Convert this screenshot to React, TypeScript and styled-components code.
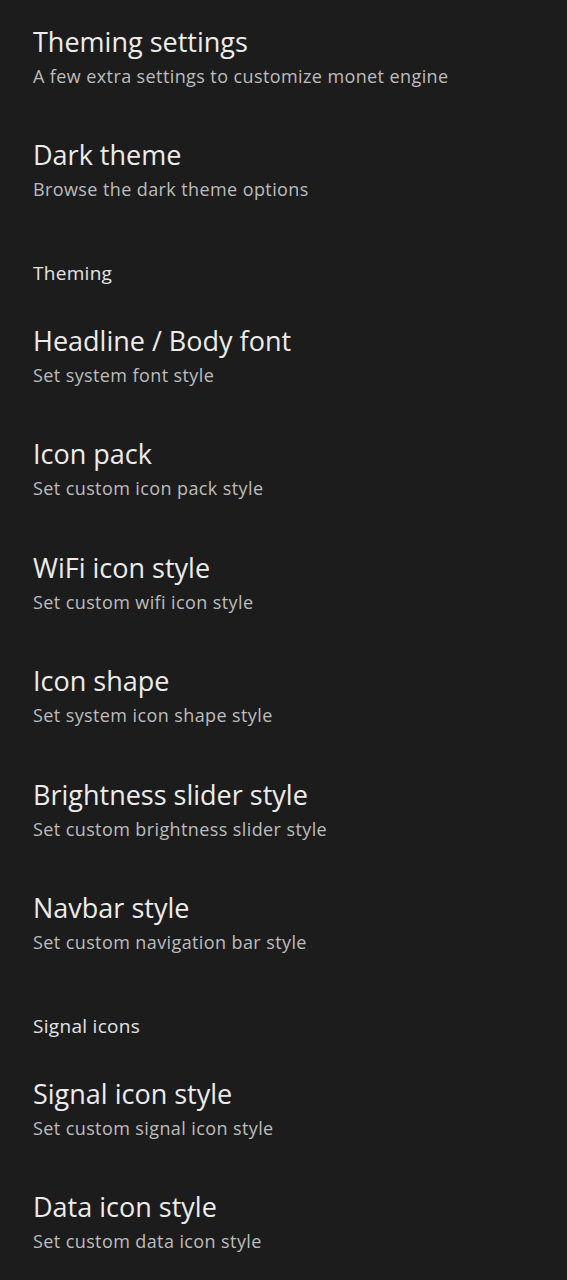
import React from "react";
import styled, { createGlobalStyle } from "styled-components";

const Global = createGlobalStyle`
  html, body { margin: 0; padding: 0; background: #1c1c1c; }
  body { font-family: "Open Sans", "Noto Sans", sans-serif; -webkit-font-smoothing: antialiased; }
`;

const Page = styled.div`
  display: flex;
  flex-direction: column;
  background: #1c1c1c;
  min-height: 1280px;
`;

const Item = styled.div`
  display: flex;
  flex-direction: column;
  gap: 6px;
  padding: 26px 33px 25.4px;
`;

const Title = styled.div`
  font-size: 27px;
  line-height: 32px;
  color: #ececec;
`;

const Subtitle = styled.div`
  font-size: 18px;
  line-height: 24px;
  color: #bcbcbc;
  letter-spacing: 0.4px;
`;

const Header = styled.div`
  padding: 34.2px 33px 14px;
  font-size: 19px;
  line-height: 24px;
  font-weight: 500;
  color: #e4e4e4;
  letter-spacing: 0.3px;
`;

type Entry = { kind: "item"; title: string; sub: string } | { kind: "header"; title: string };

const entries: Entry[] = [
  { kind: "item", title: "Theming settings", sub: "A few extra settings to customize monet engine" },
  { kind: "item", title: "Dark theme", sub: "Browse the dark theme options" },
  { kind: "header", title: "Theming" },
  { kind: "item", title: "Headline / Body font", sub: "Set system font style" },
  { kind: "item", title: "Icon pack", sub: "Set custom icon pack style" },
  { kind: "item", title: "WiFi icon style", sub: "Set custom wifi icon style" },
  { kind: "item", title: "Icon shape", sub: "Set system icon shape style" },
  { kind: "item", title: "Brightness slider style", sub: "Set custom brightness slider style" },
  { kind: "item", title: "Navbar style", sub: "Set custom navigation bar style" },
  { kind: "header", title: "Signal icons" },
  { kind: "item", title: "Signal icon style", sub: "Set custom signal icon style" },
  { kind: "item", title: "Data icon style", sub: "Set custom data icon style" },
];

export default function App() {
  return (
    <>
      <Global />
      <Page>
        {entries.map((e, i) =>
          e.kind === "header" ? (
            <Header key={i}>{e.title}</Header>
          ) : (
            <Item key={i}>
              <Title>{e.title}</Title>
              <Subtitle>{e.sub}</Subtitle>
            </Item>
          )
        )}
      </Page>
    </>
  );
}
